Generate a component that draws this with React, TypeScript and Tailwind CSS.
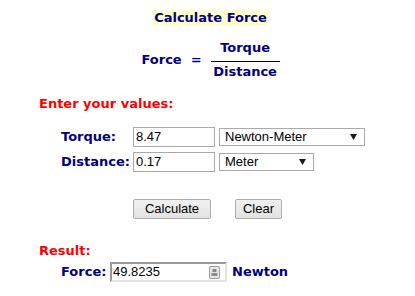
import React from 'react'

const verdana = { fontFamily: '"DejaVu Sans", Verdana, sans-serif' }
const arial = { fontFamily: '"Liberation Sans", Arial, sans-serif' }

function FakeSelect({ value, width }: { value: string; width: string }) {
  return (
    <div
      className={`ml-[4px] flex h-[18px] items-center justify-between border border-[#a9a9a9] bg-white pl-[5px] pr-[7px] text-[13px] leading-[16px] text-black ${width}`}
      style={arial}
    >
      <span>{value}</span>
      <svg width="7" height="6" viewBox="0 0 7 6">
        <path d="M0 0 H7 L3.5 6 Z" fill="#1a1a1a" />
      </svg>
    </div>
  )
}

function TextBox({ value }: { value: string }) {
  return (
    <div
      className="flex h-[20px] w-[82px] items-center border border-[#a9a9a9] bg-white pl-[2px] text-[13px] leading-[16px] text-black"
      style={arial}
    >
      {value}
    </div>
  )
}

export default function App() {
  return (
    <div className="h-[296px] w-[415px] overflow-hidden bg-white" style={verdana}>
      {/* title */}
      <div className="flex justify-center pl-[6px] pt-[10px]">
        <div className="h-[16px] bg-[#ffffcc] px-[1px] text-[13px] font-bold leading-[16px] text-[#000080]">
          Calculate Force
        </div>
      </div>

      {/* formula */}
      <div className="mt-[14px] flex items-center justify-center pl-[6px] text-[13px] font-bold leading-[16px] text-[#000080]">
        <span>Force</span>
        <span className="ml-[9px] mr-[9px]">=</span>
        <div className="flex w-[69px] flex-col items-center">
          <div className="w-full border-b border-[#000060] pb-[5px] text-center">Torque</div>
          <div className="pt-[2px] text-center">Distance</div>
        </div>
      </div>

      {/* inputs */}
      <div className="mt-[16px] pl-[39px] text-[13px] font-bold leading-[16px] text-[#ff0000]">Enter your values:</div>

      <div className="mt-[15px] flex flex-col gap-[5px] pl-[61px]">
        <div className="flex items-center">
          <span className="w-[72px] text-[13px] font-bold leading-[16px] text-[#000080]">Torque:</span>
          <TextBox value="8.47" />
          <FakeSelect value="Newton-Meter" width="w-[146px]" />
        </div>
        <div className="flex items-center">
          <span className="w-[72px] text-[13px] font-bold leading-[16px] text-[#000080]">Distance:</span>
          <TextBox value="0.17" />
          <FakeSelect value="Meter" width="w-[95px]" />
        </div>
      </div>

      {/* buttons */}
      <div className="mt-[27px] flex gap-[24px] pl-[133px]" style={arial}>
        <button className="h-[20px] w-[78px] rounded-[2px] border border-[#acacac] bg-gradient-to-b from-[#f0f0f0] to-[#e3e3e3] text-[13px] leading-[16px] text-black">
          Calculate
        </button>
        <button className="h-[20px] w-[47px] rounded-[2px] border border-[#acacac] bg-gradient-to-b from-[#f0f0f0] to-[#e3e3e3] text-[13px] leading-[16px] text-black">
          Clear
        </button>
      </div>

      {/* result */}
      <div className="mt-[24px] pl-[39px] text-[13px] font-bold leading-[16px] text-[#ff0000]">Result:</div>

      <div className="mt-[3px] flex items-center pl-[61px]">
        <span className="w-[49px] text-[13px] font-bold leading-[16px] text-[#000080]">Force:</span>
        <div
          className="flex h-[20px] w-[117px] items-center justify-between border-2 border-b-[#e3e3e3] border-l-[#999999] border-r-[#e3e3e3] border-t-[#999999] bg-white pl-[1px] pr-[5px] text-[13px] leading-[16px] text-black"
          style={arial}
        >
          <span>49.8235</span>
          <svg width="11" height="13" viewBox="0 0 11 13">
            <rect x="0.5" y="0.5" width="10" height="12" rx="1.5" fill="#e8e8e8" stroke="#9a9a9a" />
            <rect x="3.5" y="3" width="4" height="3" fill="#8a8a8a" />
            <rect x="2.5" y="7" width="6" height="3" fill="#8a8a8a" />
          </svg>
        </div>
        <span className="ml-[5px] text-[13px] font-bold leading-[16px] text-[#000080]">Newton</span>
      </div>
    </div>
  )
}
